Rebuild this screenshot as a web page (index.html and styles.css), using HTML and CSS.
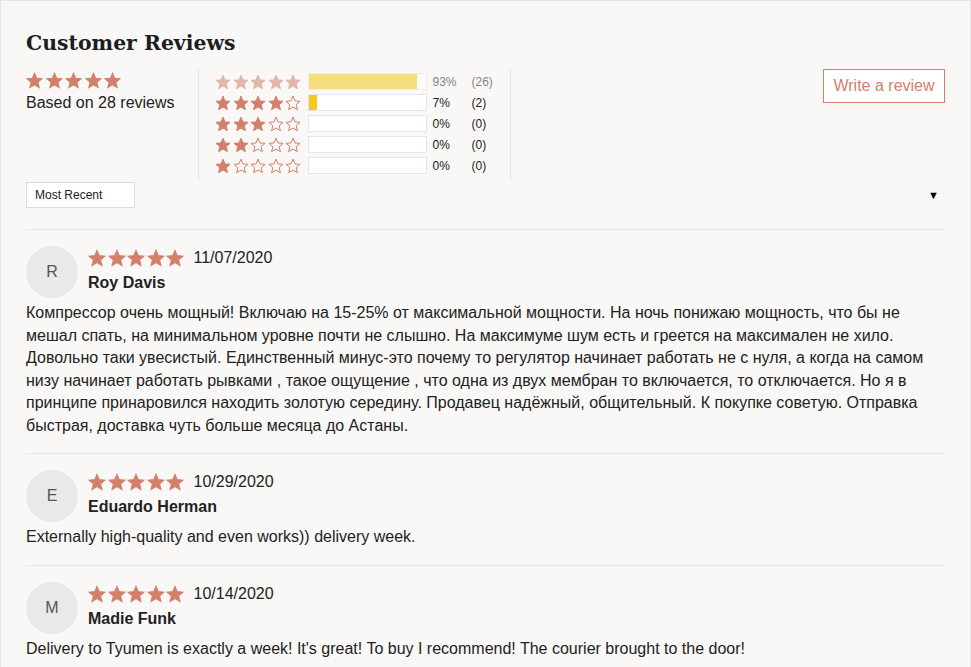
FILE: index.html
```html
<!DOCTYPE html>
<html lang="en">

<head>
  <meta charset="UTF-8">
  <meta name="viewport" content="width=device-width, initial-scale=1.0">
  <title>Customer Reviews</title>
  <link rel="stylesheet" href="styles.css">
</head>

<body>
  <svg class="sprite" xmlns="http://www.w3.org/2000/svg">
    <symbol id="star" viewBox="0 0 24 24">
      <path d="M12 1.8l3 7.1 7.6.6-5.8 5 1.8 7.5L12 18l-6.6 4 1.8-7.5-5.8-5 7.6-.6z" />
    </symbol>
  </svg>

  <div class="reviews">
    <h2 class="reviews-title">Customer Reviews</h2>

    <div class="summary-row">
      <div class="summary">
        <div class="stars stars-lg">
          <svg class="star"><use href="#star" /></svg>
          <svg class="star"><use href="#star" /></svg>
          <svg class="star"><use href="#star" /></svg>
          <svg class="star"><use href="#star" /></svg>
          <svg class="star"><use href="#star" /></svg>
        </div>
        <div class="summary-text">Based on 28 reviews</div>
      </div>

      <div class="histogram">
        <div class="hist-row faded">
          <div class="stars stars-sm">
            <svg class="star"><use href="#star" /></svg>
            <svg class="star"><use href="#star" /></svg>
            <svg class="star"><use href="#star" /></svg>
            <svg class="star"><use href="#star" /></svg>
            <svg class="star"><use href="#star" /></svg>
          </div>
          <div class="bar"><div class="bar-fill" style="width: 93%"></div></div>
          <span class="pct">93%</span>
          <span class="count">(26)</span>
        </div>
        <div class="hist-row">
          <div class="stars stars-sm">
            <svg class="star"><use href="#star" /></svg>
            <svg class="star"><use href="#star" /></svg>
            <svg class="star"><use href="#star" /></svg>
            <svg class="star"><use href="#star" /></svg>
            <svg class="star empty"><use href="#star" /></svg>
          </div>
          <div class="bar"><div class="bar-fill" style="width: 7%"></div></div>
          <span class="pct">7%</span>
          <span class="count">(2)</span>
        </div>
        <div class="hist-row">
          <div class="stars stars-sm">
            <svg class="star"><use href="#star" /></svg>
            <svg class="star"><use href="#star" /></svg>
            <svg class="star"><use href="#star" /></svg>
            <svg class="star empty"><use href="#star" /></svg>
            <svg class="star empty"><use href="#star" /></svg>
          </div>
          <div class="bar"></div>
          <span class="pct">0%</span>
          <span class="count">(0)</span>
        </div>
        <div class="hist-row">
          <div class="stars stars-sm">
            <svg class="star"><use href="#star" /></svg>
            <svg class="star"><use href="#star" /></svg>
            <svg class="star empty"><use href="#star" /></svg>
            <svg class="star empty"><use href="#star" /></svg>
            <svg class="star empty"><use href="#star" /></svg>
          </div>
          <div class="bar"></div>
          <span class="pct">0%</span>
          <span class="count">(0)</span>
        </div>
        <div class="hist-row">
          <div class="stars stars-sm">
            <svg class="star"><use href="#star" /></svg>
            <svg class="star empty"><use href="#star" /></svg>
            <svg class="star empty"><use href="#star" /></svg>
            <svg class="star empty"><use href="#star" /></svg>
            <svg class="star empty"><use href="#star" /></svg>
          </div>
          <div class="bar"></div>
          <span class="pct">0%</span>
          <span class="count">(0)</span>
        </div>
      </div>

      <button class="write-btn">Write a review</button>
    </div>

    <div class="sort-row">
      <div class="sort-select">Most Recent</div>
      <span class="sort-arrow">&#9660;</span>
    </div>

    <div class="review">
      <div class="review-head">
        <div class="avatar">R</div>
        <div class="review-meta">
          <div class="meta-top">
            <div class="stars stars-md">
              <svg class="star"><use href="#star" /></svg>
              <svg class="star"><use href="#star" /></svg>
              <svg class="star"><use href="#star" /></svg>
              <svg class="star"><use href="#star" /></svg>
              <svg class="star"><use href="#star" /></svg>
            </div>
            <span class="date">11/07/2020</span>
          </div>
          <div class="author">Roy Davis</div>
        </div>
      </div>
      <p class="review-body">Компрессор очень мощный! Включаю на 15-25% от максимальной мощности. На ночь понижаю мощность, что бы не мешал спать, на минимальном уровне почти не слышно. На максимуме шум есть и греется на максимален не хило. Довольно таки увесистый. Единственный минус-это почему то регулятор начинает работать не с нуля, а когда на самом низу начинает работать рывками , такое ощущение , что одна из двух мембран то включается, то отключается. Но я в принципе принаровился находить золотую середину. Продавец надёжный, общительный. К покупке советую. Отправка быстрая, доставка чуть больше месяца до Астаны.</p>
    </div>

    <div class="review">
      <div class="review-head">
        <div class="avatar">E</div>
        <div class="review-meta">
          <div class="meta-top">
            <div class="stars stars-md">
              <svg class="star"><use href="#star" /></svg>
              <svg class="star"><use href="#star" /></svg>
              <svg class="star"><use href="#star" /></svg>
              <svg class="star"><use href="#star" /></svg>
              <svg class="star"><use href="#star" /></svg>
            </div>
            <span class="date">10/29/2020</span>
          </div>
          <div class="author">Eduardo Herman</div>
        </div>
      </div>
      <p class="review-body">Externally high-quality and even works)) delivery week.</p>
    </div>

    <div class="review">
      <div class="review-head">
        <div class="avatar">M</div>
        <div class="review-meta">
          <div class="meta-top">
            <div class="stars stars-md">
              <svg class="star"><use href="#star" /></svg>
              <svg class="star"><use href="#star" /></svg>
              <svg class="star"><use href="#star" /></svg>
              <svg class="star"><use href="#star" /></svg>
              <svg class="star"><use href="#star" /></svg>
            </div>
            <span class="date">10/14/2020</span>
          </div>
          <div class="author">Madie Funk</div>
        </div>
      </div>
      <p class="review-body">Delivery to Tyumen is exactly a week! It's great! To buy I recommend! The courier brought to the door!</p>
    </div>
  </div>
</body>

</html>
```

FILE: styles.css
```css
body {
  margin: 0;
  font-family: "Liberation Sans", Arial, sans-serif;
  color: #222;
  background: #fff;
}

.sprite {
  display: none;
}

.reviews {
  background: #f9f8f7;
  border: 1px solid #e6e6e6;
  border-bottom: none;
  padding: 27px 25px 0;
  min-height: 667px;
  box-sizing: border-box;
}

.reviews-title {
  margin: 0;
  font-family: "DejaVu Serif", "Liberation Serif", serif;
  font-size: 20.4px;
  font-weight: bold;
  line-height: 31px;
  color: #1d1d24;
}

/* summary + histogram */

.summary-row {
  display: flex;
  align-items: flex-start;
  margin-top: 10px;
}

.summary {
  width: 172px;
  padding-top: 3px;
}

.stars {
  display: flex;
}

.star {
  fill: #d3806b;
  stroke: #d3806b;
  stroke-width: 1.5;
}

.star.empty {
  fill: none;
}

.stars-lg .star {
  width: 17px;
  height: 17px;
  margin-right: 2.6px;
}

.stars-sm .star {
  width: 16px;
  height: 16px;
  margin-right: 1.5px;
}

.stars-md .star {
  width: 18px;
  height: 18px;
  margin-right: 1.5px;
}

.summary-text {
  font-size: 16px;
  margin-top: 5px;
}

.histogram {
  border-left: 1px solid #e6e6e6;
  border-right: 1px solid #e6e6e6;
  padding: 2px 16px 5px;
}

.hist-row {
  display: flex;
  align-items: center;
  height: 21px;
  font-size: 12px;
}

.hist-row.faded {
  opacity: 0.55;
}

.bar {
  width: 117px;
  height: 15px;
  margin-left: 5px;
  border: 1px solid #e6e6e6;
  background: #fff;
}

.bar-fill {
  height: 100%;
  background: #f3c91f;
}

.pct {
  width: 39px;
  margin-left: 6px;
}

.count {
  width: 22px;
}

.write-btn {
  margin-left: auto;
  width: 122px;
  height: 34px;
  background: #fff;
  border: 1px solid #d3806b;
  color: #d3806b;
  font-family: "Liberation Sans", Arial, sans-serif;
  font-size: 16px;
  padding: 0;
  cursor: pointer;
}

/* sort */

.sort-row {
  display: flex;
  align-items: center;
  margin-top: 1px;
  padding-bottom: 21px;
  border-bottom: 1px solid #e6e6e6;
}

.sort-select {
  width: 99px;
  height: 24px;
  line-height: 24px;
  padding-left: 8px;
  border: 1px solid #dcdcdc;
  background: #fff;
  font-size: 12px;
}

.sort-arrow {
  margin-left: auto;
  margin-right: 6px;
  font-size: 11px;
  color: #000;
}

/* reviews list */

.review {
  padding: 16px 0 16px;
  border-bottom: 1px solid #e6e6e6;
}

.review:last-child {
  border-bottom: none;
}

.review-head {
  display: flex;
  align-items: flex-start;
}

.avatar {
  width: 52px;
  height: 52px;
  border-radius: 50%;
  background: #e9e9e9;
  color: #555;
  font-size: 16px;
  display: flex;
  align-items: center;
  justify-content: center;
  flex-shrink: 0;
}

.review-meta {
  margin-left: 10px;
  padding-top: 3px;
}

.meta-top {
  display: flex;
  align-items: center;
}

.date {
  margin-left: 8px;
  font-size: 16px;
}

.author {
  font-size: 16px;
  font-weight: bold;
  margin-top: 7px;
}

.review-body {
  margin: 4px 0 0;
  font-size: 16px;
  line-height: 22.5px;
}
```
